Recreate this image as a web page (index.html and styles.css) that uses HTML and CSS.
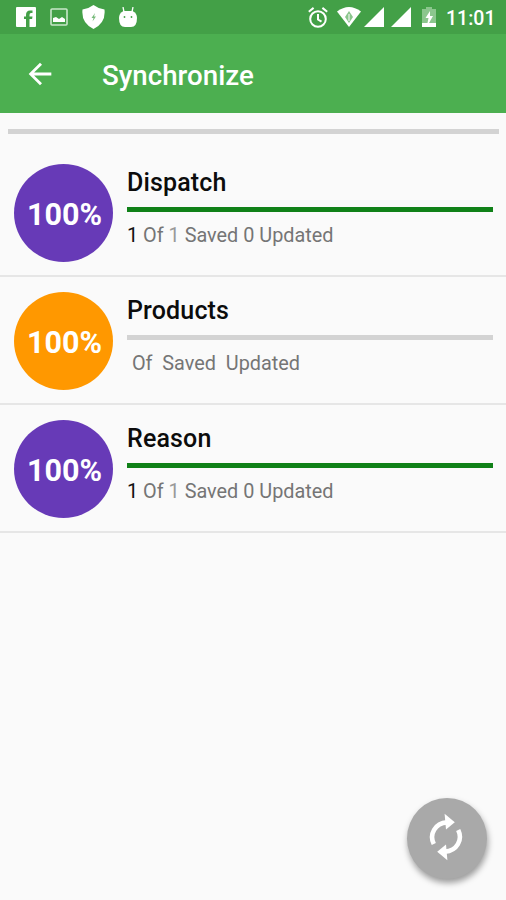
FILE: index.html
```html
<!DOCTYPE html>
<html lang="en">
<head>
<meta charset="utf-8">
<title>Synchronize</title>
<link rel="stylesheet" href="styles.css">
</head>
<body>
<div class="status">
  <div class="notifications">
    <svg width="20" height="20" viewBox="0 0 20 20"><path fill="#fff" d="M1 0h18q1 0 1 1v18q0 1-1 1H1q-1 0-1-1V1q0-1 1-1z"/><path fill="#43a047" d="M10 20v-8H8V9.500h2V8q0-4.500 4-4.500h2.500V6H15q-1.500 0-1.500 2v1.500h3l-.4 2.500h-2.600v8z"/></svg>
    <svg width="18" height="18" viewBox="0 0 18 18"><rect x="1" y="1" width="16" height="16" rx="1" fill="none" stroke="#c9e6ca" stroke-width="1.600"/><path fill="#fff" d="M3 14v-4l3-1 3 2 3-2 3 2v3z"/></svg>
    <svg width="23" height="24" viewBox="0 0 23 24"><path fill="#fff" d="M11.500 0Q16 3.500 22.500 4.500 24 18 11.500 24-1 18 .5 4.500 7 3.500 11.500 0z"/><path fill="#78ba7b" d="M13 8l-3.500 5h2l-1 3.500 3.500-5h-2z"/></svg>
    <svg width="18" height="20" viewBox="0 0 18 20"><path fill="none" stroke="#fff" stroke-width="1.300" d="M4 0l1 5M14 0l-1 5"/><path fill="#fff" d="M4.500 4h9Q18 6 18 11q0 9-6 9H6q-6 0-6-9 0-5 4.500-7z"/><circle cx="5.500" cy="10" r=".9" fill="#43a047"/><circle cx="12.500" cy="10" r=".9" fill="#43a047"/></svg>
  </div>
  <div class="system">
    <svg class="alarm" width="20" height="21" viewBox="0 0 20 21"><g fill="none" stroke="#fff" stroke-width="2"><circle cx="10" cy="12" r="7.800"/><path d="M10 7v5.500l3.500 2.200M.8 4.700L5.600.9M19.200 4.700L14.400.9"/></g></svg>
    <svg class="wifi" width="24" height="20" viewBox="0 0 24 20"><path fill="#fff" d="M0 4.500Q12-4.500 24 4.500L12 20z"/><path fill="#8bc68d" d="M12 4l4 6-4 6-4-6z"/><path stroke="#fff" d="M12 7v7"/></svg>
    <svg class="signal" width="20" height="20" viewBox="0 0 20 20"><path fill="#fff" d="M20 0v20H0z"/></svg>
    <svg class="signal" width="20" height="20" viewBox="0 0 20 20"><path fill="#fff" d="M20 0v20H0z"/></svg>
    <svg class="battery" width="14" height="20" viewBox="0 0 14 20"><path fill="#8bc68d" d="M4 0h6v2h4v18H0V2h4z"/><path fill="#fff" d="M8 4l-4.500 7H6.500L5.500 16H0v4h14v-4H7l4-7H8z"/></svg>
    <span class="clock">11:01</span>
  </div>
</div>
<header class="appbar">
  <svg class="back" width="34" height="34" viewBox="0 0 24 24"><path fill="#fff" d="M20 11H7.830l5.590-5.590L12 4l-8 8 8 8 1.410-1.410L7.830 13H20v-2z"/></svg>
  <h1>Synchronize</h1>
</header>
<main>
  <div class="bar overall"></div>
  <section class="row">
    <div class="badge">100%</div>
    <div class="info">
      <h2>Dispatch</h2>
      <div class="bar done"></div>
      <p><b>1</b> Of <i>1</i> Saved 0 Updated</p>
    </div>
  </section>
  <section class="row">
    <div class="badge orange">100%</div>
    <div class="info">
      <h2>Products</h2>
      <div class="bar"></div>
      <p> Of  Saved  Updated</p>
    </div>
  </section>
  <section class="row">
    <div class="badge">100%</div>
    <div class="info">
      <h2>Reason</h2>
      <div class="bar done"></div>
      <p><b>1</b> Of <i>1</i> Saved 0 Updated</p>
    </div>
  </section>
</main>
<button class="fab" aria-label="Sync">
  <svg width="48" height="60" viewBox="0 0 48 60"><g id="half"><path fill="none" stroke="#fff" stroke-width="4.600" d="M11.800 37C7 27.500 13 16.200 25 15.400"/><path fill="#fff" d="M22.600 6.800L32.800 15.200 24 22.600z"/></g><use href="#half" transform="rotate(180 24 30)"/></svg>
</button>
</body>
</html>
```

FILE: styles.css
```css
* { box-sizing: border-box; }
body {
  margin: 0;
  height: 900px;
  overflow: hidden;
  background: #fafafa;
  font-family: Roboto, "Liberation Sans", sans-serif;
}
svg { display: block; flex: none; }
h1, h2, p { margin: 0; }
.status {
  height: 34px;
  background: #43a047;
  display: flex;
  justify-content: space-between;
  align-items: center;
  padding: 0 11px 0 16px;
}
.notifications { display: flex; align-items: center; gap: 14px; }
.system { display: flex; align-items: center; }
.wifi { margin-left: 9px; }
.signal { margin-left: 3px; }
.signal + .signal { margin-left: 7px; }
.battery { margin-left: 11px; }
.clock {
  width: 49px;
  margin-left: 10px;
  color: #fff;
  font-size: 19.500px;
  font-weight: 500;
  line-height: 30px;
  white-space: nowrap;
  padding-top: 4px;
}
.appbar {
  height: 79px;
  background: #4caf50;
  display: flex;
  align-items: center;
  padding-left: 23px;
}
.appbar h1 {
  margin-left: 45px;
  padding-top: 4px;
  color: #fff;
  font-size: 27.700px;
  font-weight: 500;
  line-height: 36px;
}
.bar { height: 5px; background: #d3d3d3; }
.done { background: #108118; }
.overall { margin: 16px 7px 15px 8px; }
.row {
  height: 128px;
  display: flex;
  padding: 15px 13px 0 14px;
  border-bottom: 2px solid #e6e6e6;
}
.badge {
  flex: none;
  width: 99px;
  height: 98px;
  padding-left: 2px;
  border-radius: 50%;
  background: #673ab7;
  color: #fff;
  font-size: 30.500px;
  font-weight: 700;
  line-height: 101px;
  text-align: center;
}
.orange { background: #ff9800; }
.info { flex: 1; margin-left: 14px; }
h2 {
  height: 43px;
  color: #0c0c0c;
  font-size: 25px;
  font-weight: 500;
  line-height: 38px;
  letter-spacing: .15px;
}
.info p {
  margin-top: 11px;
  color: #757575;
  font-size: 19.850px;
  font-weight: 400;
  line-height: 26px;
  white-space: pre;
}
.info b { color: #111; font-weight: 400; }
.info i { color: #999; font-style: normal; }
.fab {
  position: absolute;
  left: 407px;
  top: 798px;
  width: 80px;
  height: 81px;
  padding: 0 2px 3px 0;
  border: 0;
  border-radius: 50%;
  background: #a9a9a9;
  box-shadow: 1px 4px 6px rgba(0, 0, 0, .38);
  display: flex;
  align-items: center;
  justify-content: center;
}
```
